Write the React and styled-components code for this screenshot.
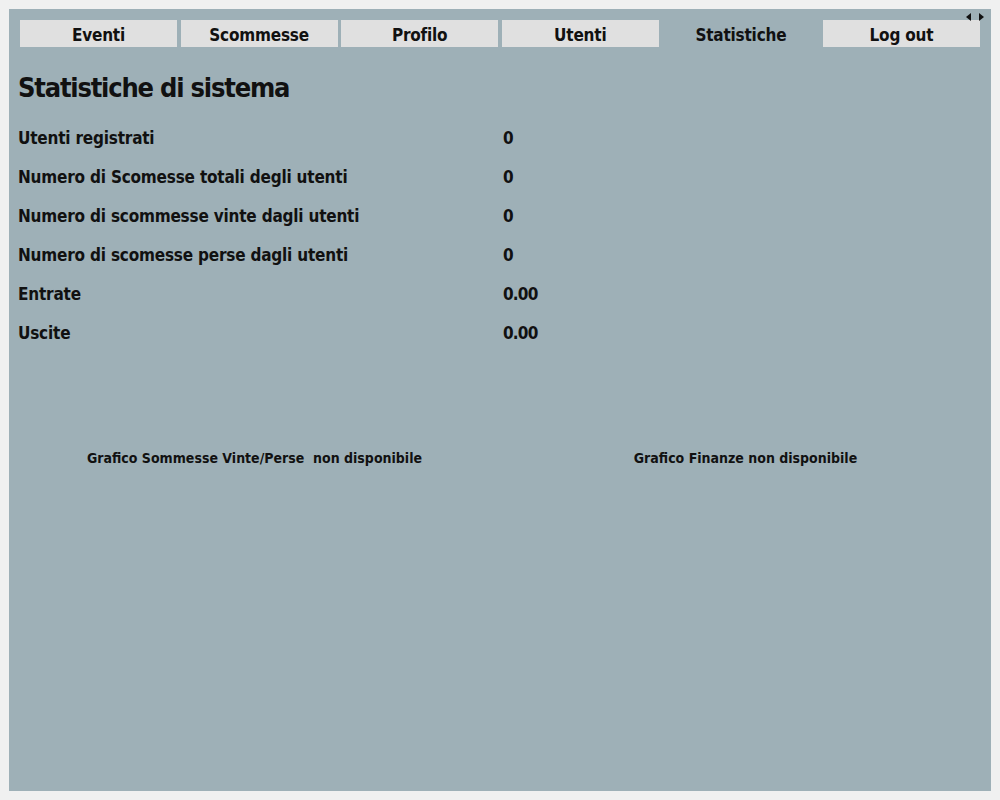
import React, { useState } from 'react'
import styled, { createGlobalStyle } from 'styled-components'

const GlobalStyle = createGlobalStyle`
  html, body {
    margin: 0;
    padding: 0;
    background: #f0f0f0;
  }
  body {
    font-family: "Liberation Sans Narrow", "DejaVu Sans Condensed", "Liberation Sans", sans-serif;
    font-weight: bold;
    color: #111;
  }
`

const tabs = ['Eventi', 'Scommesse', 'Profilo', 'Utenti', 'Statistiche', 'Log out']

const stats = [
  { label: 'Utenti registrati', value: '0' },
  { label: 'Numero di Scomesse totali degli utenti', value: '0' },
  { label: 'Numero di scommesse vinte dagli utenti', value: '0' },
  { label: 'Numero di scomesse perse dagli utenti', value: '0' },
  { label: 'Entrate', value: '0.00' },
  { label: 'Uscite', value: '0.00' },
]

export default function App() {
  const [active, setActive] = useState('Statistiche')

  return (
    <>
      <GlobalStyle />
      <Page>
        <Panel>
          <Arrows>
            <Arrow $dir="left" />
            <Arrow $dir="right" />
          </Arrows>
          <TabBar>
            {tabs.map((t) => (
              <Tab key={t} $selected={t === active} onClick={() => setActive(t)}>
                {t}
              </Tab>
            ))}
          </TabBar>
          <Content>
            <Title>Statistiche di sistema</Title>
            <StatGrid>
              {stats.map((s) => (
                <React.Fragment key={s.label}>
                  <StatLabel>{s.label}</StatLabel>
                  <StatValue>{s.value}</StatValue>
                </React.Fragment>
              ))}
            </StatGrid>
            <Charts>
              <ChartSlot>Grafico Sommesse Vinte/Perse&nbsp; non disponibile</ChartSlot>
              <ChartSlot>Grafico Finanze non disponibile</ChartSlot>
            </Charts>
          </Content>
        </Panel>
      </Page>
    </>
  )
}

const Page = styled.div`
  width: 1000px;
  height: 800px;
  padding: 9px;
  box-sizing: border-box;
`

const Panel = styled.div`
  position: relative;
  height: 782px;
  background: #9eb0b7;
  display: flex;
  flex-direction: column;
`

const Arrows = styled.div`
  position: absolute;
  top: 4px;
  right: 7px;
  display: flex;
  gap: 8px;
`

const Arrow = styled.span`
  width: 0;
  height: 0;
  border-top: 4px solid transparent;
  border-bottom: 4px solid transparent;
  ${(p) => (p.$dir === 'left' ? 'border-right: 5px solid #111;' : 'border-left: 5px solid #111;')}
`

const TabBar = styled.div`
  display: grid;
  grid-template-columns: repeat(6, 157px);
  column-gap: 3.6px;
  padding: 11px 11px 0 11px;
`

const Tab = styled.div`
  height: 27px;
  display: flex;
  align-items: center;
  justify-content: center;
  font-size: 17px;
  letter-spacing: -0.2px;
  background: ${(p) => (p.$selected ? 'transparent' : '#e0e0e0')};
  cursor: pointer;
  padding-top: 3px;
  box-sizing: border-box;
`

const Content = styled.div`
  padding: 0 9px;
  flex: 1;
  display: flex;
  flex-direction: column;
`

const Title = styled.h1`
  margin: 25px 0 0 0;
  font-size: 27px;
  letter-spacing: -1.2px;
  line-height: 32px;
  font-weight: bold;
`

const StatGrid = styled.div`
  display: grid;
  grid-template-columns: 485px auto;
  grid-auto-rows: 39px;
  margin-top: 14px;
  align-items: center;
`

const StatLabel = styled.div`
  font-size: 17px;
  letter-spacing: -0.2px;
`

const StatValue = styled.div`
  font-size: 17px;
  letter-spacing: -0.8px;
`

const Charts = styled.div`
  display: grid;
  grid-template-columns: 1fr 1fr;
  margin-top: 98px;
  margin-left: -9px;
  margin-right: -9px;
`

const ChartSlot = styled.div`
  text-align: center;
  font-size: 14px;
`
